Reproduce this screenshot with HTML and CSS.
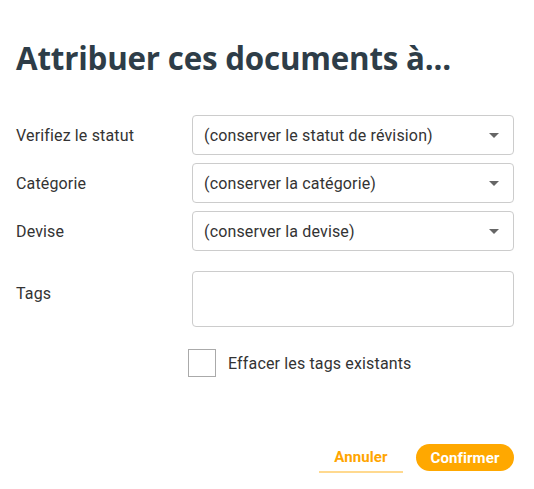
FILE: index.html
```html
<!DOCTYPE html>
<html lang="fr">
<head>
<meta charset="utf-8">
<title>Attribuer ces documents</title>
<link rel="stylesheet" href="styles.css">
</head>
<body>
<div class="dialog">
  <h1 class="title">Attribuer ces documents à...</h1>
  <div class="fields">
    <div class="row">
      <label class="label">Verifiez le statut</label>
      <div class="select"><span>(conserver le statut de révision)</span><span class="caret"></span></div>
    </div>
    <div class="row">
      <label class="label">Catégorie</label>
      <div class="select"><span>(conserver la catégorie)</span><span class="caret"></span></div>
    </div>
    <div class="row">
      <label class="label">Devise</label>
      <div class="select"><span>(conserver la devise)</span><span class="caret"></span></div>
    </div>
    <div class="row row-tags">
      <label class="label label-tags">Tags</label>
      <div class="tags"></div>
    </div>
    <div class="check-row">
      <span class="checkbox"></span>
      <span class="check-text">Effacer les tags existants</span>
    </div>
  </div>
  <div class="actions">
    <button class="btn-cancel">Annuler</button>
    <button class="btn-confirm">Confirmer</button>
  </div>
</div>
</body>
</html>
```

FILE: styles.css
```css
* { box-sizing: border-box; }
html, body { margin: 0; padding: 0; background: #fff; }
body { font-family: Roboto, "Liberation Sans", sans-serif; color: #333; }
.dialog { width: 534px; padding: 0 20px 0 16px; }
.title {
  margin: 0;
  padding-top: 38px;
  font-family: "Open Sans", Roboto, sans-serif;
  font-weight: 700;
  font-size: 31.3px;
  line-height: 40px;
  color: #2e3d48;
  letter-spacing: -0.2px;
}
.fields { margin-top: 37px; display: flex; flex-direction: column; gap: 8px; }
.row { display: flex; align-items: flex-start; }
.label {
  width: 176px;
  font-size: 16px;
  letter-spacing: 0.15px;
  line-height: 20px;
  padding-top: 11px;
  color: #333;
}
.select {
  width: 322px;
  height: 40px;
  border: 1px solid #ccc;
  border-radius: 4px;
  display: flex;
  align-items: center;
  justify-content: space-between;
  padding: 0 14px 0 11px;
  font-size: 16px;
  letter-spacing: 0.15px;
  color: #333;
}
.caret {
  width: 0; height: 0;
  border-left: 5px solid transparent;
  border-right: 5px solid transparent;
  border-top: 5px solid #666;
}
.row-tags { margin-top: 12px; }
.label-tags { padding-top: 13px; }
.tags {
  width: 322px;
  height: 56px;
  border: 1px solid #ccc;
  border-radius: 4px;
}
.check-row {
  display: flex;
  align-items: center;
  margin-top: 14px;
  padding-left: 172px;
  gap: 12px;
}
.checkbox {
  width: 28px; height: 28px;
  border: 1px solid #aaa;
  display: block;
}
.check-text { font-size: 16px; letter-spacing: 0.15px; color: #333; }
.actions {
  display: flex;
  justify-content: flex-end;
  align-items: center;
  gap: 13px;
  margin-top: 65px;
}
.btn-cancel {
  background: none;
  border: none;
  border-bottom: 2px solid #ffd98f;
  font-family: Roboto, sans-serif;
  font-weight: 700;
  font-size: 15px;
  letter-spacing: 0.1px;
  color: #ffa500;
  width: 84px;
  height: 29px;
  padding: 0 0 1px;
  margin-top: 2px;
}
.btn-confirm {
  background: #ffa800;
  border: none;
  border-radius: 14px;
  color: #fff;
  font-family: Roboto, sans-serif;
  font-weight: 700;
  font-size: 15px;
  letter-spacing: 0.1px;
  width: 98px;
  height: 27px;
  padding: 0;
}
```
